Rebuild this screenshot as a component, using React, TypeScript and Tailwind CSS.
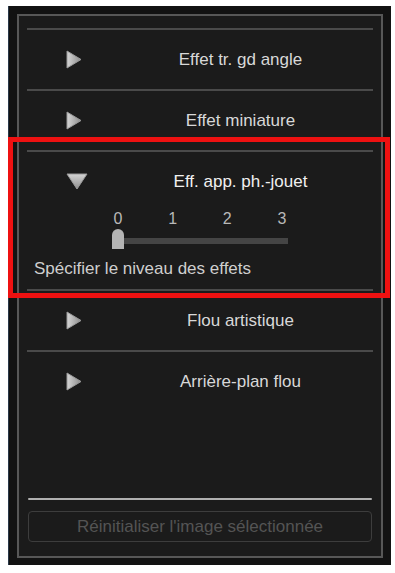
import React from 'react';

const font = { fontFamily: '"Liberation Sans", Arial, sans-serif' };

function Arrow({ open }: { open?: boolean }) {
  if (open) {
    return (
      <svg width="22" height="17" viewBox="0 0 22 17">
        <defs>
          <linearGradient id="gd" x1="0" y1="0" x2="0" y2="1">
            <stop offset="0" stopColor="#d4d4d4" />
            <stop offset="1" stopColor="#8e8e8e" />
          </linearGradient>
        </defs>
        <polygon points="1,1 21,1 11,16" fill="url(#gd)" stroke="#9a9a9a" strokeWidth="1" strokeLinejoin="round" />
      </svg>
    );
  }
  return (
    <svg width="16" height="19" viewBox="0 0 16 19">
      <defs>
        <linearGradient id="gr" x1="0" y1="0" x2="1" y2="0">
          <stop offset="0" stopColor="#d6d6d6" />
          <stop offset="1" stopColor="#8c8c8c" />
        </linearGradient>
      </defs>
      <polygon points="1,1 15,9.5 1,18" fill="url(#gr)" stroke="#9a9a9a" strokeWidth="1" strokeLinejoin="round" />
    </svg>
  );
}

function Row({ label, open, bright }: { label: string; open?: boolean; bright?: boolean }) {
  return (
    <div className="flex items-center h-[59px]">
      <div className="w-[81px] pl-[39px] flex items-center">
        <Arrow open={open} />
      </div>
      <div className={`flex-1 text-center text-[17px] ${bright ? 'text-[#f0f0f0]' : 'text-[#d8d8d8]'}`}>{label}</div>
    </div>
  );
}

function Slider() {
  return (
    <div className="pl-[86px]">
      <div className="flex justify-between w-[174px] text-[16px] leading-[16px] text-[#b8b8b8]">
        {['0', '1', '2', '3'].map((d) => (
          <span key={d} className="w-[10px] text-center">{d}</span>
        ))}
      </div>
      <div className="relative mt-[11px] ml-[1px] w-[174px] h-[6px] bg-[#454545]">
        <div className="absolute left-[-2px] top-[-9px] w-[12px] h-[20px] rounded-t-[6px] bg-[#b4b4b4]" />
      </div>
    </div>
  );
}

export default function App() {
  return (
    <div className="relative w-[395px] h-[573px] bg-white" style={font}>
      <div className="ml-[8px] pt-[6px]">
        <div className="w-[383px] h-[559px] bg-[#121212] pl-[8px] pr-[8px] pt-[8px] pb-[7px] border-l border-[#2a3848]">
          <div className="h-full border-2 border-[#575757] bg-[#1b1b1b] px-2 pt-3 pb-[14px] flex flex-col">
            <div className="border-t-2 border-[#4a4a4a]">
              <Row label="Effet tr. gd angle" />
            </div>
            <div className="border-t-2 border-[#4a4a4a]">
              <Row label="Effet miniature" />
            </div>
            <div className="border-t-2 border-[#4a4a4a] pb-[10px]">
              <Row label="Eff. app. ph.-jouet" open bright />
              <Slider />
              <div className="mt-[15px] pl-[7px] text-[17px] leading-[20px] text-[#cfcfcf]">Spécifier le niveau des effets</div>
            </div>
            <div className="border-t-2 border-[#4a4a4a]">
              <Row label="Flou artistique" />
            </div>
            <div className="border-t-2 border-[#4a4a4a]">
              <Row label="Arrière-plan flou" />
            </div>
            <div className="flex-1" />
            <div className="h-[2px] mx-[1px] bg-[#b0b0b0] rounded-full" />
            <div className="mt-[11px] mx-[1px] h-[31px] rounded-[4px] border border-[#3d3d3d] flex items-center justify-center text-[17px] text-[#545454]">
              Réinitialiser l'image sélectionnée
            </div>
          </div>
        </div>
      </div>
      <div className="absolute left-[8px] top-[137px] w-[382px] h-[161px] border-[5px] border-[#ee1111]" />
    </div>
  );
}
